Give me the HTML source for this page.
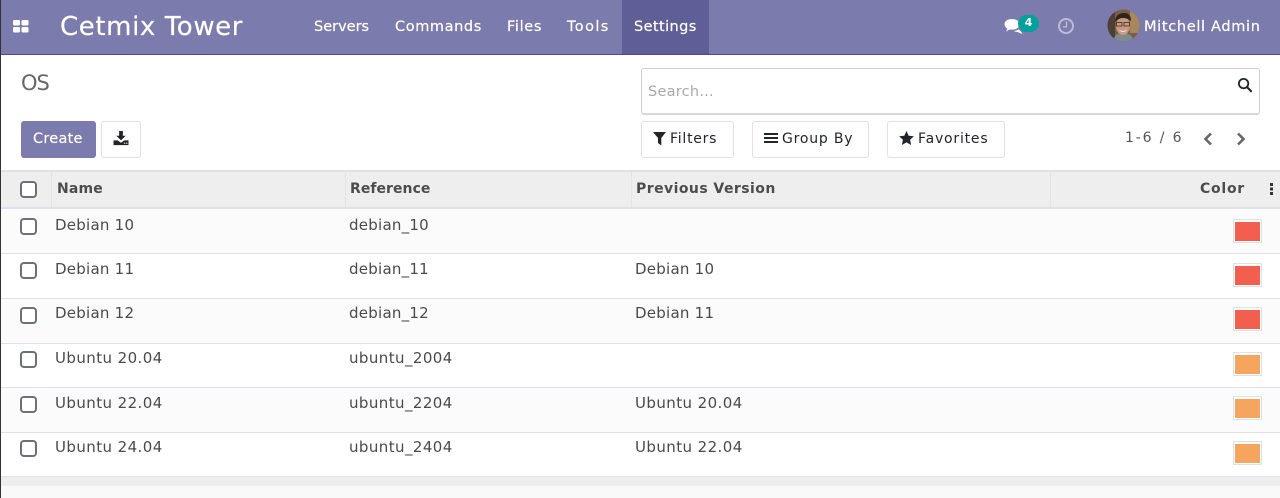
<!DOCTYPE html>
<html><head><meta charset="utf-8">
<style>
html,body{margin:0;padding:0;width:1280px;height:498px;overflow:hidden;background:#fff}
body{position:relative;font-family:"DejaVu Sans","Liberation Sans",sans-serif;font-size:14px;color:#4c4c4c}
.a{position:absolute;white-space:nowrap}
.t{position:absolute;white-space:nowrap;line-height:20px;height:20px}
.r{font-size:15px;letter-spacing:.25px;color:#4a4a4a}
.u{letter-spacing:.42px}
.nav{color:#fff;font-size:14.5px;top:17px;-webkit-text-stroke:.2px #fff}
.btn{position:absolute;box-sizing:border-box;top:121px;height:37px;background:#fff;border:1px solid #dee2e6;border-radius:3px}
.bt{position:absolute;top:129px;line-height:20px;color:#212529;font-size:14px;white-space:nowrap}
.cb{position:absolute;left:20px;width:13px;height:13px;border:2px solid #6c7178;border-radius:4px;background:#fff;box-sizing:content-box}
.sw{position:absolute;left:1233px;width:29px;height:24px;box-sizing:border-box;border:1px solid #dee2e6;background:#fff}
.sw i{position:absolute;left:1px;top:2px;width:25px;height:19px;display:block}
.hl{position:absolute;left:0;width:1280px}
.th{font-weight:bold;color:#4c4c4c;font-size:14px;top:179px}
</style></head><body>
<!-- navbar -->
<div class="a" style="left:0;top:0;width:1280px;height:54px;background:#7c7bad"></div>
<div class="a" style="left:0;top:54px;width:1280px;height:1px;background:#4b4a9c"></div>
<div class="a" style="left:622px;top:0;width:87px;height:54px;background:#5f5e97"></div>
<svg class="a" style="left:13px;top:20px" width="16" height="13" viewBox="0 0 16 13"><g fill="#fff"><rect x="0" y="0" width="7" height="5.5" rx="1.2"/><rect x="8.5" y="0" width="7" height="5.5" rx="1.2"/><rect x="0" y="7" width="7" height="5.5" rx="1.2"/><rect x="8.5" y="7" width="7" height="5.5" rx="1.2"/></g></svg>
<div class="t" style="left:60px;top:16px;color:#fff;font-size:26px;line-height:22px;height:22px;letter-spacing:.6px;-webkit-text-stroke:.2px #fff">Cetmix Tower</div>
<div class="t nav" style="left:314px;letter-spacing:0">Servers</div>
<div class="t nav" style="left:395px;letter-spacing:.6px">Commands</div>
<div class="t nav" style="left:507px;letter-spacing:.65px">Files</div>
<div class="t nav" style="left:567px;letter-spacing:1.4px">Tools</div>
<div class="t nav" style="left:634px;letter-spacing:.4px">Settings</div>
<svg class="a" style="left:1003px;top:18px" width="22" height="17" viewBox="0 0 22 17"><g fill="#fff"><path d="M9 1C4.500 1 1.500 3.200 1.500 6.300c0 1.900 1.100 3.400 2.900 4.400L3 13.500l4-2.100c.6.100 1.300.2 2 .2 4.400 0 7.500-2.200 7.500-5.300S13.400 1 9 1z"/><path d="M11 12.800c1.900 0 3.500-.5 4.800-1.400l3.700 3.900-1.400.3-3.500-1.600c-1.300.2-2.500-.2-3.600-1.200z"/></g></svg>
<div class="a" style="left:1018px;top:15px;width:21px;height:17px;border-radius:9px;background:#00a09d;color:#fff;font-size:11px;font-weight:bold;text-align:center;line-height:16px">4</div>
<svg class="a" style="left:1057px;top:17px" width="18" height="18" viewBox="0 0 18 18"><circle cx="9" cy="9" r="7" fill="none" stroke="#bdbcd6" stroke-width="2"/><path d="M9.500 4.500V9.800H6" fill="none" stroke="#bdbcd6" stroke-width="1.400"/></svg>
<svg class="a" style="left:1107px;top:9px" width="33" height="33" viewBox="0 0 33 33"><defs><clipPath id="c"><circle cx="16.500" cy="16.500" r="16"/></clipPath></defs><g clip-path="url(#c)"><rect width="33" height="33" fill="#7a5f45"/><rect x="23" width="10" height="24" fill="#a8875a"/><rect width="8" height="33" fill="#4d3f35"/><path d="M6 33c1-7 5-9 10-9s10 2 11 9z" fill="#7d8a8e"/><ellipse cx="16" cy="17" rx="7" ry="9" fill="#c99a80"/><path d="M8 13c0-6 4-9 9-9s7 3 7 8c-3-3-9-4-12-2-2 1-3 2-4 3z" fill="#2e251c"/><rect x="9.500" y="13.500" width="5.500" height="3.500" fill="none" stroke="#3a3028" stroke-width=".8"/><rect x="17" y="13.500" width="5.500" height="3.500" fill="none" stroke="#3a3028" stroke-width=".8"/><path d="M12 20.500c2 2 6 2 8 0-1 3-7 3-8 0z" fill="#fff"/></g></svg>
<div class="t nav" style="left:1144px;letter-spacing:.67px">Mitchell Admin</div>

<!-- control panel -->
<div class="t" style="left:21px;top:72px;font-size:21px;line-height:22px;height:22px;color:#666;letter-spacing:-1px">OS</div>
<div class="a" style="left:21px;top:121px;width:75px;height:37px;background:#7c7bad;border-radius:3px"></div>
<div class="t" style="left:33px;top:129px;color:#fff;font-size:14.500px;letter-spacing:.25px;-webkit-text-stroke:.15px #fff">Create</div>
<div class="btn" style="left:101px;width:40px"></div>
<svg class="a" style="left:113px;top:131px" width="16" height="15" viewBox="0 0 16 16"><path fill="#212529" d="M6 0h4v5h3L8 10 3 5h3z"/><path fill="#212529" d="M0 10h4.500L8 12.500 11.500 10H16v5H0z"/><rect x="11" y="12.500" width="1.500" height="1" fill="#fff"/><rect x="13.300" y="12.500" width="1.500" height="1" fill="#fff"/></svg>

<div class="a" style="left:641px;top:68px;width:619px;height:47px;box-sizing:border-box;border:1px solid #cfcfcf;border-bottom:2px solid #d8d8d8;border-radius:3px;background:#fff"></div>
<div class="t" style="left:648px;top:82px;color:#a8a8a8;font-size:14.500px;letter-spacing:.25px">Search...</div>
<svg class="a" style="left:1237px;top:77px" width="16" height="16" viewBox="0 0 17 17"><circle cx="7" cy="7" r="5" fill="none" stroke="#212529" stroke-width="1.900"/><path d="M10.800 10.800l4.200 4.400" stroke="#212529" stroke-width="2.200" stroke-linecap="round"/></svg>

<div class="btn" style="left:641px;width:93px"></div>
<svg class="a" style="left:653px;top:132px" width="14" height="14" viewBox="0 0 14 14"><path fill="#212529" d="M0 0h13L8.300 6v7.500L5 11V6z"/></svg>
<div class="bt" style="left:670px;letter-spacing:.75px">Filters</div>
<div class="btn" style="left:752px;width:117px"></div>
<svg class="a" style="left:764px;top:132px" width="14" height="13" viewBox="0 0 14 13"><g fill="#212529"><rect y="1" width="14" height="2"/><rect y="5" width="14" height="2"/><rect y="9" width="14" height="2"/></g></svg>
<div class="bt" style="left:782px;letter-spacing:.8px">Group By</div>
<div class="btn" style="left:887px;width:118px"></div>
<svg class="a" style="left:899px;top:131px" width="15" height="14" viewBox="0 0 15 14"><path fill="#212529" d="M7.500 0l2.200 4.700 5.200.6-3.800 3.500 1 5.200-4.600-2.600L2.900 14l1-5.200L.1 5.300l5.200-.6z"/></svg>
<div class="bt" style="left:918px;letter-spacing:.8px">Favorites</div>

<div class="t" style="left:1125px;top:128px;color:#555;font-size:14px;letter-spacing:1.85px">1-6 / 6</div>
<svg class="a" style="left:1202px;top:132px" width="12" height="14" viewBox="0 0 12 14"><path d="M9 1.500L3.500 7 9 12.500" fill="none" stroke="#666" stroke-width="2.600"/></svg>
<svg class="a" style="left:1235px;top:132px" width="12" height="14" viewBox="0 0 12 14"><path d="M3 1.500L8.500 7 3 12.500" fill="none" stroke="#666" stroke-width="2.600"/></svg>

<!-- table header -->
<div class="hl" style="top:170px;height:2px;background:#dee2e6"></div>
<div class="hl" style="top:172px;height:35px;background:#eeeeee"></div>
<div class="hl" style="top:207px;height:2px;background:#dee2e6"></div>
<div class="a" style="left:51px;top:172px;width:1px;height:35px;background:#e4e4e4"></div>
<div class="a" style="left:345px;top:172px;width:1px;height:35px;background:#e4e4e4"></div>
<div class="a" style="left:631px;top:172px;width:1px;height:35px;background:#e4e4e4"></div>
<div class="a" style="left:1050px;top:172px;width:1px;height:35px;background:#e4e4e4"></div>
<div class="t th" style="left:57px;letter-spacing:.15px">Name</div>
<div class="t th" style="left:350px;letter-spacing:.05px">Reference</div>
<div class="t th" style="left:636px;letter-spacing:.45px">Previous Version</div>
<div class="t th" style="left:1200px;letter-spacing:.75px">Color</div>
<svg class="a" style="left:1269px;top:182px" width="6" height="14" viewBox="0 0 6 14"><g fill="#333"><rect x="1" y="1" width="3" height="3"/><rect x="1" y="5.500" width="3" height="3"/><rect x="1" y="10" width="3" height="3"/></g></svg>
<div class="cb" style="top:181px"></div>

<!-- rows -->
<div class="hl" style="top:209px;height:44px;background:#fbfbfb"></div>
<div class="hl" style="top:253px;height:1px;background:#dee2e6"></div>
<div class="hl" style="top:298px;height:45px;background:#fbfbfb"></div>
<div class="hl" style="top:298px;height:1px;background:#dee2e6"></div>
<div class="hl" style="top:343px;height:1px;background:#dee2e6"></div>
<div class="hl" style="top:387px;height:45px;background:#fbfbfb"></div>
<div class="hl" style="top:387px;height:1px;background:#dee2e6"></div>
<div class="hl" style="top:432px;height:1px;background:#dee2e6"></div>

<div class="cb" style="top:218px"></div>
<div class="t r" style="left:55px;top:215px">Debian 10</div>
<div class="t r" style="left:349px;top:215px">debian_10</div>
<div class="sw" style="top:219px"><i style="background:#f25f4f"></i></div>

<div class="cb" style="top:262px"></div>
<div class="t r" style="left:55px;top:259px">Debian 11</div>
<div class="t r" style="left:349px;top:259px">debian_11</div>
<div class="t r" style="left:635px;top:259px">Debian 10</div>
<div class="sw" style="top:263px"><i style="background:#f25f4f"></i></div>

<div class="cb" style="top:307px"></div>
<div class="t r" style="left:55px;top:303px">Debian 12</div>
<div class="t r" style="left:349px;top:303px">debian_12</div>
<div class="t r" style="left:635px;top:303px">Debian 11</div>
<div class="sw" style="top:307px"><i style="background:#f25f4f"></i></div>

<div class="cb" style="top:351px"></div>
<div class="t r u" style="left:55px;top:348px">Ubuntu 20.04</div>
<div class="t r u" style="left:349px;top:348px">ubuntu_2004</div>
<div class="sw" style="top:352px"><i style="background:#f5a55e"></i></div>

<div class="cb" style="top:396px"></div>
<div class="t r u" style="left:55px;top:393px">Ubuntu 22.04</div>
<div class="t r u" style="left:349px;top:393px">ubuntu_2204</div>
<div class="t r u" style="left:635px;top:393px">Ubuntu 20.04</div>
<div class="sw" style="top:396px"><i style="background:#f5a55e"></i></div>

<div class="cb" style="top:440px"></div>
<div class="t r u" style="left:55px;top:437px">Ubuntu 24.04</div>
<div class="t r u" style="left:349px;top:437px">ubuntu_2404</div>
<div class="t r u" style="left:635px;top:437px">Ubuntu 22.04</div>
<div class="sw" style="top:441px"><i style="background:#f5a55e"></i></div>

<!-- footer -->
<div class="hl" style="top:476px;height:1px;background:#dee2e6"></div>
<div class="hl" style="top:477px;height:9px;background:#eeeeee"></div>
<div class="hl" style="top:486px;height:12px;background:#f9f9f9"></div>
<!-- left edge -->
<div class="a" style="left:0;top:0;width:1px;height:498px;background:#333"></div>
</body></html>
